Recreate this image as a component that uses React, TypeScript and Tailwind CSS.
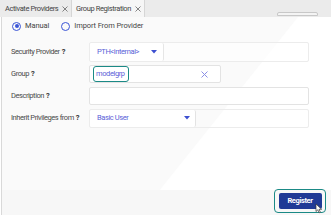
import React from "react";

const Help = () => <span className="font-bold text-[#333] ml-[2px]">?</span>;

const Row = ({ label, children }: { label: string; children: React.ReactNode }) => (
  <div className="flex items-center h-[22px]">
    <div className="w-[78px] shrink-0 whitespace-nowrap text-[7.5px] tracking-[-0.45px] text-[#4a4a4a]">
      {label}
      <Help />
    </div>
    <div className="flex-1">{children}</div>
  </div>
);

const Caret = () => (
  <svg width="6" height="4" viewBox="0 0 6 4"><path d="M0 0 H6 L3 3.5 Z" fill="#3c4fd0" /></svg>
);

const X = ({ c = "#666" }: { c?: string }) => (
  <svg className="shrink-0" width="6" height="6" viewBox="0 0 6 6"><path d="M0.5 0.5 L5.5 5.5 M5.5 0.5 L0.5 5.5" stroke={c} strokeWidth="0.8" /></svg>
);

export default function App() {
  return (
    <div className="w-[331px] h-[218px] bg-white relative overflow-hidden" style={{ fontFamily: "Roboto, 'Liberation Sans', sans-serif" }}>
      <div className="h-[17px] bg-[#ebebeb] flex items-stretch relative">
        <div className="w-[72px] shrink-0 whitespace-nowrap flex items-center gap-[4px] pl-[5px] text-[7.5px] tracking-[-0.4px] text-[#444] border-r border-[#d6d6d6]">
          Activate Providers
          <X />
        </div>
        <div className="w-[73px] shrink-0 whitespace-nowrap flex items-center gap-[4px] pl-[4px] text-[7.5px] tracking-[-0.4px] text-[#444] bg-[#f6f6f6] border-r border-[#d6d6d6]">
          Group Registration
          <X />
        </div>
        <div className="absolute right-[13px] top-[12px] w-[41px] h-[4px] border border-[#c8c8c8] rounded-t-[2px] bg-[#f4f4f4]" />
      </div>
      <div className="relative h-[198px] border-l border-b border-[#d9d9d9] ml-[1px]">
        <svg className="absolute inset-0" width="330" height="198" viewBox="0 0 330 198">
          <polygon points="0,0 296,0 157,174 0,174" fill="#fafafa" />
          <rect x="0" y="173" width="330" height="25" fill="#f7f7f7" />
        </svg>
        <div className="relative pl-[9px]">
          <div className="flex items-center h-[18px] text-[7.5px] tracking-[-0.1px] text-[#444] whitespace-nowrap">
            <span className="w-[9px] h-[9px] rounded-full border border-[#3b55d6] flex items-center justify-center ml-[1px]">
              <span className="w-[4px] h-[4px] rounded-full bg-[#3b55d6]" />
            </span>
            <span className="ml-[4px]">Manual</span>
            <span className="w-[9px] h-[9px] rounded-full border border-[#3b55d6] ml-[12px]" />
            <span className="ml-[4px]">Import From Provider</span>
          </div>
          <div className="flex flex-col mt-[6px] w-[298px]">
            <Row label="Security Provider">
              <div className="h-[20px] border border-[#ececec] rounded-[2px] bg-white/60">
                <div className="w-[74px] h-[18px] border-r border-[#e6e6e6] rounded-[2px] bg-white flex items-center justify-between pl-[7px] pr-[6px] text-[7.5px] tracking-[-0.4px] text-[#5b5fd8] whitespace-nowrap">
                  PTH&lt;internal&gt;
                  <Caret />
                </div>
              </div>
            </Row>
            <Row label="Group">
              <div className="h-[18px] w-[132px] border border-[#e3e3e3] rounded-[2px] bg-white flex items-center justify-between pl-[3px] pr-[12px]">
                <div className="h-[16px] w-[36px] px-[2px] border-[1.5px] border-[#1b8a86] rounded-[3px] flex items-center text-[7.5px] tracking-[-0.4px] text-[#5b5fd8]">modelgrp</div>
                <svg width="7" height="7" viewBox="0 0 7 7"><path d="M0.5 0.5 L6.5 6.5 M6.5 0.5 L0.5 6.5" stroke="#8a8ee6" strokeWidth="1" /></svg>
              </div>
            </Row>
            <Row label="Description">
              <div className="h-[18px] border border-[#e3e3e3] rounded-[2px] bg-white" />
            </Row>
            <Row label="Inherit Privileges from">
              <div className="h-[19px] border border-[#ececec] rounded-[2px]">
                <div className="w-[106px] h-[17px] border-r border-[#e3e3e3] rounded-[2px] bg-white flex items-center justify-between pl-[7px] pr-[5px] text-[7.5px] tracking-[-0.4px] text-[#5b5fd8]">
                  Basic User
                  <Caret />
                </div>
              </div>
            </Row>
          </div>
        </div>
        <div className="absolute right-[5px] bottom-[1px] w-[52px] h-[24px] border-[1.5px] border-[#1b8a86] rounded-[4px] flex items-center justify-center">
          <div className="w-[43px] h-[16px] bg-[#203a96] rounded-[2px] flex items-center justify-center text-white text-[7.5px] tracking-[-0.4px] font-bold">Register</div>
          <svg className="absolute right-[2px] bottom-[-2px]" width="8" height="11" viewBox="0 0 8 11">
            <path d="M1 1 L1 8.5 L2.8 6.8 L4.2 9.8 L5.4 9.2 L4 6.3 L6.6 6.3 Z" fill="#fff" stroke="#333" strokeWidth="0.7" />
          </svg>
        </div>
      </div>
    </div>
  );
}
